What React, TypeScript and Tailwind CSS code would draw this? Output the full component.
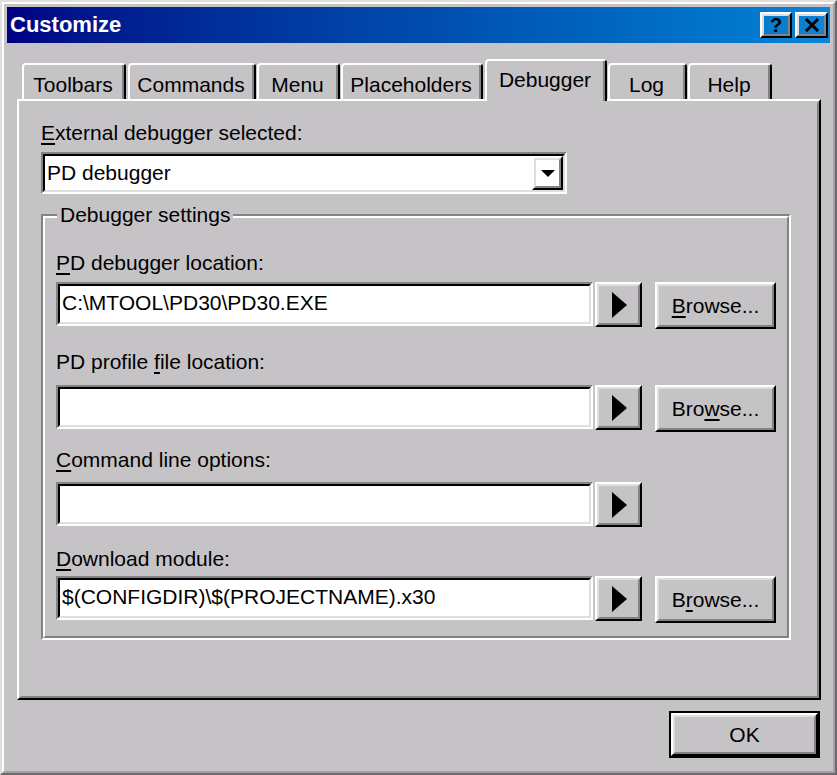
import React from "react";

// classic 3D bevel pieces (2px per line)
const raisedOuter = "border-2 border-t-white border-l-white border-r-black border-b-black";
const raisedInner = "border-2 border-t-[#dedfde] border-l-[#dedfde] border-r-[#848284] border-b-[#848284]";
const sunkenOuter = "border-2 border-t-[#848284] border-l-[#848284] border-r-white border-b-white";
const sunkenInner = "border-2 border-t-black border-l-black border-r-[#dedfde] border-b-[#dedfde]";

const TABS = [
  { name: "Toolbars", cls: "ml-[5px] w-[104px]" },
  { name: "Commands", cls: "ml-[2px] w-[128px]" },
  { name: "Menu", cls: "ml-[1px] w-[83px]" },
  { name: "Placeholders", cls: "ml-[1px] w-[142px]" },
  { name: "Debugger", cls: "ml-[2px] w-[122px]", active: true },
  { name: "Log", cls: "ml-[1px] w-[79px]" },
  { name: "Help", cls: "ml-[1px] w-[84px]" },
];

const ROWS = [
  { label: "PD debugger location:", at: 0, value: "C:\\MTOOL\\PD30\\PD30.EXE", browse: 0, labelMt: "mt-[24px]", rowMt: "mt-[7px]" },
  { label: "PD profile file location:", at: 11, value: "", browse: 3, labelMt: "mt-[21px]", rowMt: "mt-[11px]" },
  { label: "Command line options:", at: 0, value: "", browse: -1, labelMt: "mt-[16px]", rowMt: "mt-[10px]" },
  { label: "Download module:", at: 0, value: "$(CONFIGDIR)\\$(PROJECTNAME).x30", browse: 1, labelMt: "mt-[20px]", rowMt: "mt-[5px]" },
];

// text with one underlined access key
function Accel({ text, at }: { text: string; at: number }) {
  if (at < 0) return <>{text}</>;
  return (
    <>
      {text.slice(0, at)}
      <span className="underline decoration-2 underline-offset-[3px]">{text[at]}</span>
      {text.slice(at + 1)}
    </>
  );
}

function Field({ value }: { value: string }) {
  return (
    <div className={`${sunkenOuter} w-[537px] h-[44px]`}>
      <div className={`${sunkenInner} h-full bg-white flex items-center pl-[2px] pb-[2px] whitespace-nowrap`}>
        {value}
      </div>
    </div>
  );
}

function ArrowButton() {
  return (
    <div className={`${raisedOuter} ml-[2px] w-[47px] h-[45px]`}>
      <div className={`${raisedInner} h-full flex items-center justify-center pl-[1px]`}>
        <svg width="15" height="26" viewBox="0 0 15 26">
          <polygon points="0,0 15,13 0,26" fill="#000" />
        </svg>
      </div>
    </div>
  );
}

function BrowseButton({ at }: { at: number }) {
  return (
    <div className={`${raisedOuter} ml-[13px] w-[121px] h-[47px]`}>
      <div className={`${raisedInner} h-full flex items-center justify-center`}>
        <span>
          <Accel text="Browse..." at={at} />
        </span>
      </div>
    </div>
  );
}

export default function App() {
  return (
    <div className="w-[837px] h-[775px] bg-[#c6c3c6] text-black text-[21px] leading-[24px] font-['Liberation_Sans',Arial,sans-serif]">
      <div className="h-full border-2 border-t-[#dedfde] border-l-[#dedfde] border-r-[#6b696b] border-b-[#6b696b]">
        <div className="h-full border-2 border-t-white border-l-white border-r-[#a5a2a5] border-b-[#a5a2a5] p-[3px] flex flex-col">
          {/* caption */}
          <div className="h-[36px] flex items-center bg-linear-to-r from-[#000084] to-[#1084d6] pl-[3px] pr-[2px]">
            <div className="flex-1 text-white font-bold text-[22px]">Customize</div>
            <div className={`${raisedOuter} w-[32px] h-[26px]`}>
              <div className={`${raisedInner} h-full flex items-center justify-center font-bold text-[20px] leading-none`}>
                ?
              </div>
            </div>
            <div className={`${raisedOuter} ml-[3px] w-[33px] h-[26px]`}>
              <div className={`${raisedInner} h-full flex items-center justify-center`}>
                <svg width="16" height="14" viewBox="0 0 16 14">
                  <path d="M2 1 L14 13 M14 1 L2 13" stroke="#000" strokeWidth="3" />
                </svg>
              </div>
            </div>
          </div>

          <div className="ml-[10px]">
            {/* tab strip */}
            <div className="mt-[16px] h-[40px] flex items-end">
              {TABS.map((t) =>
                t.active ? (
                  <div
                    key={t.name}
                    className={`${t.cls} relative z-10 h-[42px] -mb-[2px] bg-[#c6c3c6] border-t-2 border-l-2 border-r-2 border-t-white border-l-white border-r-black rounded-t-[4px]`}
                  >
                    <div className="h-full border-r-2 border-r-[#848284] pt-[7px] text-center">{t.name}</div>
                  </div>
                ) : (
                  <div
                    key={t.name}
                    className={`${t.cls} h-[36px] border-t-2 border-l-2 border-r-2 border-t-white border-l-white border-r-black rounded-t-[4px]`}
                  >
                    <div className="h-full border-r-2 border-r-[#848284] pt-[8px] text-center">{t.name}</div>
                  </div>
                )
              )}
            </div>

            {/* tab page */}
            <div className="w-[804px] h-[601px] border-2 border-t-white border-l-white border-r-black border-b-black">
              <div className="h-full border-2 border-t-[#c6c3c6] border-l-[#c6c3c6] border-r-[#848284] border-b-[#848284] pl-[20px]">
                <div className="pt-[18px]">
                  <Accel text="External debugger selected:" at={0} />
                </div>

                {/* combo box */}
                <div className={`${sunkenOuter} mt-[7px] w-[526px] h-[42px]`}>
                  <div className={`${sunkenInner} h-full bg-white flex`}>
                    <div className="flex-1 flex items-center pl-[2px] pb-[1px]">PD debugger</div>
                    <div className={`${raisedOuter} w-[31px] h-full`}>
                      <div className={`${raisedInner} h-full flex items-center justify-center`}>
                        <svg width="14" height="7" viewBox="0 0 14 7">
                          <polygon points="0,0 14,0 7,7" fill="#000" />
                        </svg>
                      </div>
                    </div>
                  </div>
                </div>

                {/* group box */}
                <div className="mt-[20px] w-[750px] h-[426px] border-2 border-t-[#848284] border-l-[#848284] border-r-white border-b-white">
                  <div className="h-full border-2 border-t-white border-l-white border-r-[#848284] border-b-[#848284]">
                    <div className="-mt-[15px] ml-[12px] w-fit px-[3px] bg-[#c6c3c6]">Debugger settings</div>

                    {ROWS.map((r) => (
                      <div key={r.label} className="pl-[11px]">
                        <div className={r.labelMt}>
                          <Accel text={r.label} at={r.at} />
                        </div>
                        <div className={`${r.rowMt} flex items-start`}>
                          <Field value={r.value} />
                          <ArrowButton />
                          {r.browse >= 0 && <BrowseButton at={r.browse} />}
                        </div>
                      </div>
                    ))}
                  </div>
                </div>
              </div>
            </div>
          </div>

          {/* footer */}
          <div className="mt-[11px] mr-[10px] flex justify-end">
            <div className="w-[151px] h-[47px] border-2 border-black">
              <div className={`${raisedOuter} h-full`}>
                <div className="h-full border-2 border-t-[#dedfde] border-l-[#dedfde] border-r-[#848284] border-b-[#848284] flex items-center justify-center">
                  OK
                </div>
              </div>
            </div>
          </div>
        </div>
      </div>
    </div>
  );
}
